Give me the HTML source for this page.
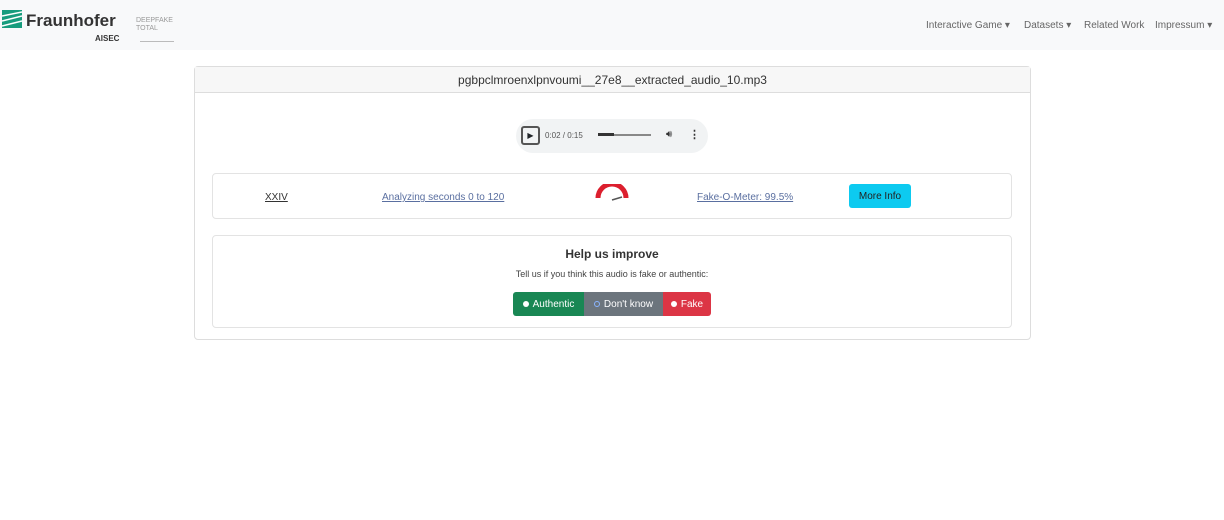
<!DOCTYPE html>
<html><head><style>
body{margin:0;width:1224px;height:520px;background:#fff;font-family:"Liberation Sans",sans-serif;position:relative;overflow:hidden;color:#212529}
.nav{position:absolute;left:0;top:0;width:1224px;height:50px;background:#f8f9fa}
.abs{position:absolute}
.navl{font-size:10px;color:#666;top:20px}
.card{position:absolute;left:194px;top:66px;width:835px;height:272px;border:1px solid #ddd;border-radius:4px}
.hdr{height:25px;background:#f7f7f7;border-bottom:1px solid #ddd;text-align:center;font-size:12px;line-height:26px;color:#333}
a{color:#5a6fa0;text-decoration:underline;font-size:10px}
.btn{position:absolute;top:292px;height:24px;color:#fff;font-size:10px;line-height:26px}
.dot{display:inline-block;width:6px;height:6px;border-radius:50%;background:#fff;margin-right:4px;vertical-align:0}
</style></head><body>
<div class="nav">
 <svg class="abs" style="left:2px;top:10px" width="20" height="18"><rect width="20" height="18" fill="#179c7d"/><path d="M0 6L20 2M0 11L20 6M0 16L20 11" stroke="#fff" stroke-width="1.5"/></svg>
 <div class="abs" style="left:26px;top:11px;font-size:17px;font-weight:bold;color:#333">Fraunhofer</div>
 <div class="abs" style="left:95px;top:34px;font-size:8px;font-weight:bold;color:#333">AISEC</div>
 <div class="abs" style="left:136px;top:17px;font-size:7px;color:#999;line-height:8px">DEEPFAKE<br>TOTAL</div>
 <div class="abs" style="left:140px;top:41px;width:34px;border-top:1px solid #bbb"></div>
 <div class="abs navl" style="left:926px">Interactive Game ▾</div>
 <div class="abs navl" style="left:1024px">Datasets ▾</div>
 <div class="abs navl" style="left:1084px">Related Work</div>
 <div class="abs navl" style="left:1155px">Impressum ▾</div>
</div>
<div class="card"><div class="hdr">pgbpclmroenxlpnvoumi__27e8__extracted_audio_10.mp3</div></div>
<div class="abs" style="left:516px;top:119px;width:192px;height:34px;border-radius:17px;background:#f1f3f4"></div>
<div class="abs" style="left:521px;top:126px;width:19px;height:19px;border:2px solid #555;border-radius:3px;box-sizing:border-box;font-size:8px;text-align:center;line-height:15px">▶</div>
<div class="abs" style="left:545px;top:131px;font-size:8px;color:#555">0:02 / 0:15</div>
<div class="abs" style="left:598px;top:134px;width:53px;height:2px;background:#888"></div>
<div class="abs" style="left:598px;top:133px;width:16px;height:3px;background:#333"></div>
<div class="abs" style="left:666px;top:129px;font-size:10px;color:#333">🔊︎</div>
<div class="abs" style="left:689px;top:128px;font-size:11px;color:#333;font-weight:bold">⋮</div>
<div class="abs" style="left:212px;top:173px;width:798px;height:44px;border:1px solid #e3e3e3;border-radius:4px"></div>
<div class="abs" style="left:265px;top:187px"><a style="color:#333">XXIV</a></div>
<div class="abs" style="left:382px;top:187px"><a>Analyzing seconds 0 to 120</a></div>
<svg class="abs" style="left:594px;top:184px" width="36" height="22"><path d="M4 14A14 14 0 0 1 32 14" fill="none" stroke="#dc1f2e" stroke-width="5"/><path d="M18 16L28 13" stroke="#555" stroke-width="1.5"/></svg>
<div class="abs" style="left:697px;top:187px"><a>Fake-O-Meter: 99.5%</a></div>
<div class="abs" style="left:849px;top:184px;width:62px;height:24px;background:#0dcaf0;border-radius:3px;font-size:10px;text-align:center;line-height:26px;color:#222">More Info</div>
<div class="abs" style="left:212px;top:235px;width:798px;height:91px;border:1px solid #e3e3e3;border-radius:4px"></div>
<div class="abs" style="left:212px;top:247px;width:800px;text-align:center;font-size:12px;font-weight:bold;color:#333">Help us improve</div>
<div class="abs" style="left:212px;top:269px;width:800px;text-align:center;font-size:9px;color:#444">Tell us if you think this audio is fake or authentic:</div>
<div class="btn" style="left:513px;width:71px;background:#198754;border-radius:3px 0 0 3px;text-align:center"><span class="dot"></span>Authentic</div>
<div class="btn" style="left:584px;width:79px;background:#6c757d;text-align:center"><span class="dot" style="background:none;border:1px solid #8ab4ff;width:4px;height:4px"></span>Don't know</div>
<div class="btn" style="left:663px;width:48px;background:#dc3545;border-radius:0 3px 3px 0;text-align:center"><span class="dot"></span>Fake</div>
</body></html>
